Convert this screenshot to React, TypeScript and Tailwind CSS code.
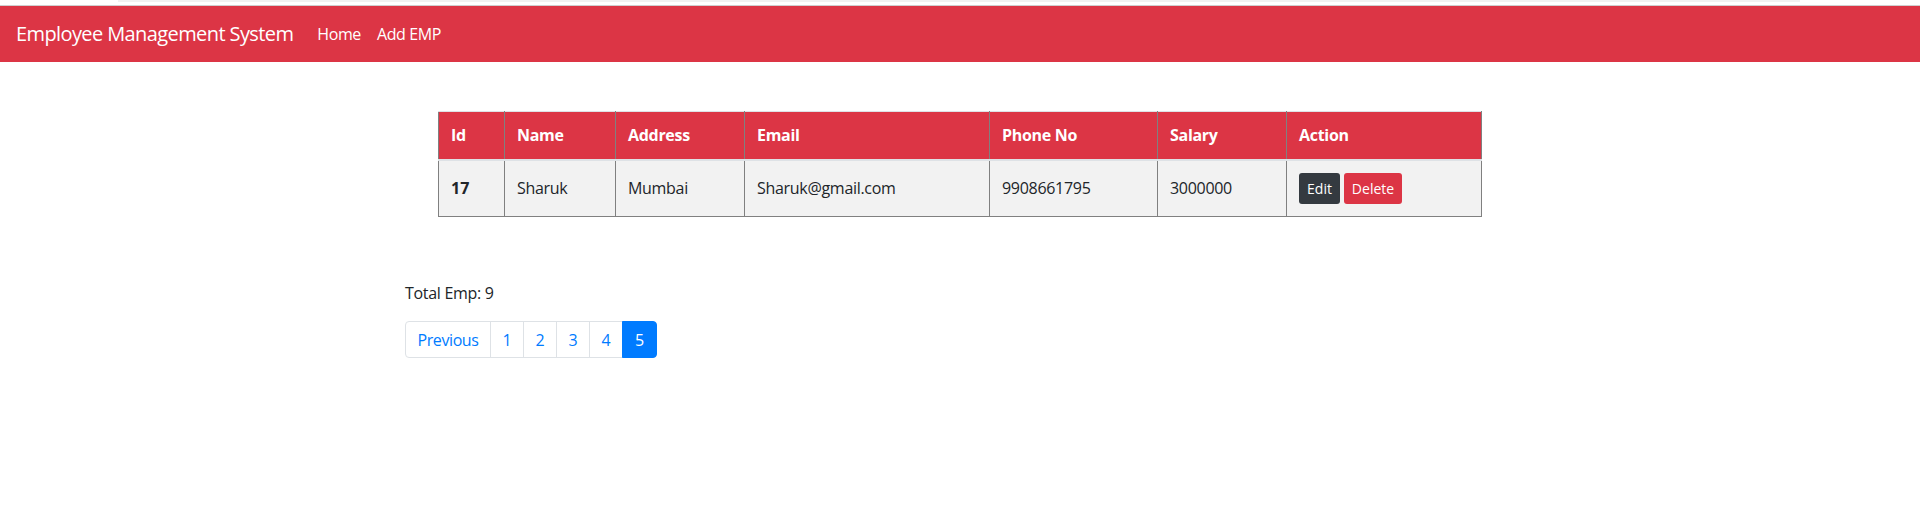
const columns = [
  { label: 'Id', width: 'w-[66px]' },
  { label: 'Name', width: 'w-[111px]' },
  { label: 'Address', width: 'w-[129px]' },
  { label: 'Email', width: 'w-[245px]' },
  { label: 'Phone No', width: 'w-[168px]' },
  { label: 'Salary', width: 'w-[129px]' },
  { label: 'Action', width: 'w-[195px]' },
]

const employee = {
  id: 17,
  name: 'Sharuk',
  address: 'Mumbai',
  email: 'Sharuk@gmail.com',
  phone: '9908661795',
  salary: '3000000',
}

const pages = ['1', '2', '3', '4', '5']

export default function App() {
  return (
    <div className="min-h-[531px] bg-white text-[#212529] font-['Open_Sans',sans-serif] text-[16px]">
      {/* top strip */}
      <div className="h-[5px] border-b border-[#cfcfcf] box-content">
        <div className="ml-[118px] w-[1682px] h-[2px] bg-[#f1f1f1]" />
      </div>

      {/* Navbar */}
      <nav className="h-[56px] bg-[#dc3545] flex items-center px-4">
        <span className="text-white text-[20px] mr-4 tracking-[-0.6px]">Employee Management System</span>
        <a className="text-white px-2 tracking-[-0.4px]">Home</a>
        <a className="text-white px-2 tracking-[-0.4px]">Add EMP</a>
      </nav>

      {/* Table */}
      <div className="pt-[49px] flex justify-center">
        <table className="w-[1043px] border-collapse border border-[#808080] table-fixed">
          <thead>
            <tr className="bg-[#dc3545] text-white">
              {columns.map((c) => (
                <th
                  key={c.label}
                  className={`${c.width} h-[48px] px-3 text-left font-bold border-x border-[#808080] border-t border-t-[#dee2e6] border-b-2 border-b-[#dee2e6] tracking-[-0.3px]`}
                >
                  {c.label}
                </th>
              ))}
            </tr>
          </thead>
          <tbody>
            <tr className="bg-[#f2f2f2] h-[57px]">
              <td className="px-3 font-bold border border-[#808080]">{employee.id}</td>
              <td className="px-3 border border-[#808080] tracking-[-0.3px]">{employee.name}</td>
              <td className="px-3 border border-[#808080] tracking-[-0.3px]">{employee.address}</td>
              <td className="px-3 border border-[#808080] tracking-[-0.3px]">{employee.email}</td>
              <td className="px-3 border border-[#808080] tracking-[-0.3px]">{employee.phone}</td>
              <td className="px-3 border border-[#808080] tracking-[-0.3px]">{employee.salary}</td>
              <td className="px-3 border border-[#808080]">
                <div className="flex gap-[4px]">
                  <button className="h-[31px] w-[41px] rounded-[3px] bg-[#343a40] text-white text-[14px]">
                    Edit
                  </button>
                  <button className="h-[31px] w-[58px] rounded-[3px] bg-[#dc3545] text-white text-[14px]">
                    Delete
                  </button>
                </div>
              </td>
            </tr>
          </tbody>
        </table>
      </div>

      {/* Footer: count + pagination */}
      <div className="w-[1140px] mx-auto px-[15px] mt-[64px]">
        <p className="leading-6 mb-4 tracking-[-0.3px]">Total Emp: 9</p>
        <ul className="flex">
          <li>
            <a className="flex items-center justify-center w-[86px] h-[37px] border border-[#dee2e6] rounded-l-[4px] text-[#007bff] tracking-[-0.4px]">
              Previous
            </a>
          </li>
          {pages.map((p) =>
            p === '5' ? (
              <li key={p}>
                <a className="flex items-center justify-center w-[35px] h-[37px] -ml-px border border-[#007bff] bg-[#007bff] rounded-r-[4px] text-white">
                  {p}
                </a>
              </li>
            ) : (
              <li key={p}>
                <a className="flex items-center justify-center w-[34px] h-[37px] -ml-px border border-[#dee2e6] text-[#007bff]">
                  {p}
                </a>
              </li>
            )
          )}
        </ul>
      </div>
    </div>
  )
}
